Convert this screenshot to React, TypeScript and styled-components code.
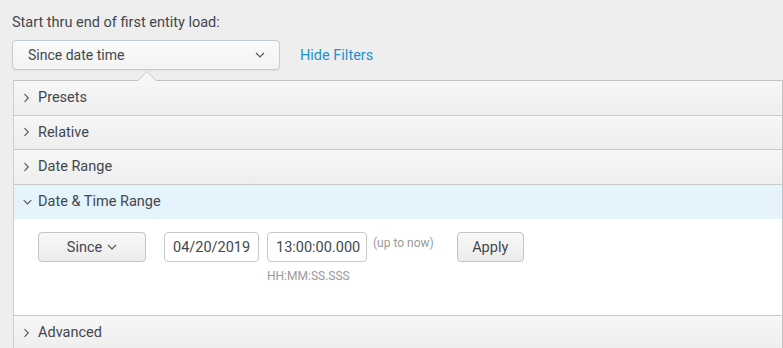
import styled, {createGlobalStyle} from 'styled-components';

const GlobalStyle = createGlobalStyle`
  html, body {
    margin: 0;
    padding: 0;
    background: #eeeeee;
    font-family: Roboto, "Liberation Sans", sans-serif;
    color: #42474d;
  }
`;

const Chevron = ({open = false}: {open?: boolean}) =>
  open ? (
    <svg width="9" height="10" viewBox="0 0 9 10" fill="none">
      <path d="M0.7 3.2 L4.5 7 L8.3 3.2" stroke="#555" strokeWidth="1.1" />
    </svg>
  ) : (
    <svg width="9" height="10" viewBox="0 0 9 10" fill="none">
      <path d="M1.5 1.2 L5.3 5 L1.5 8.8" stroke="#555" strokeWidth="1.1" />
    </svg>
  );

const DownCaret = () => (
  <svg width="10" height="6" viewBox="0 0 10 6" fill="none">
    <path d="M1 1 L5 5 L9 1" stroke="#555" strokeWidth="1.2" />
  </svg>
);

const SmallCaret = () => (
  <svg width="10" height="6" viewBox="0 0 10 6" fill="none" style={{marginLeft: 5}}>
    <path d="M1 1 L5 5 L9 1" stroke="#555" strokeWidth="1.1" />
  </svg>
);

const sections = ['Presets', 'Relative', 'Date Range'];

export default function App() {
  return (
    <>
      <GlobalStyle />
      <Page>
        <Label>Start thru end of first entity load:</Label>
        <TopRow>
          <Select>
            <span>Since date time</span>
            <DownCaret />
          </Select>
          <HideLink>Hide Filters</HideLink>
        </TopRow>
        <Panel>
          <Notch />
          {sections.map((s) => (
            <Header key={s}>
              <Chevron />
              {s}
            </Header>
          ))}
          <Header $active>
            <Chevron open />
            Date &amp; Time Range
          </Header>
          <Body>
            <Button $width={108}>
              Since <SmallCaret />
            </Button>
            <Field $width={95} $ml={18}>04/20/2019</Field>
            <TimeGroup>
              <Field $width={100} $ml={8}>13:00:00.000</Field>
              <Hint>HH:MM:SS.SSS</Hint>
            </TimeGroup>
            <UpToNow>(up to now)</UpToNow>
            <Button $width={67} $ml={23}>Apply</Button>
          </Body>
          <Header>
            <Chevron />
            Advanced
          </Header>
        </Panel>
      </Page>
    </>
  );
}

const Page = styled.div`
  padding: 15px 0 0 12px;
  height: 348px;
  box-sizing: border-box;
  overflow: hidden;
`;

const Label = styled.div`
  font-size: 14.5px;
  line-height: 16px;
`;

const TopRow = styled.div`
  display: flex;
  align-items: center;
  margin-top: 9px;
`;

const Select = styled.div`
  width: 268px;
  height: 30px;
  box-sizing: border-box;
  border: 1px solid #c3cbd4;
  border-radius: 4px;
  background: linear-gradient(#fafafa, #f3f3f3);
  box-shadow: 0 1px 1px rgba(0, 0, 0, 0.06);
  display: flex;
  align-items: center;
  justify-content: space-between;
  padding: 0 14px 0 15px;
  font-size: 14px;
`;

const HideLink = styled.a`
  margin-left: 20px;
  font-size: 14.5px;
  color: #1e93c6;
  cursor: pointer;
`;

const Panel = styled.div`
  position: relative;
  margin-top: 10px;
  margin-left: 1px;
  border-top: 1px solid #c3c3c3;
  border-left: 1px solid #d0d0d0;
  border-right: 1px solid #c3c3c3;
  background: #fff;
`;

const Notch = styled.div`
  position: absolute;
  top: -9px;
  left: 124px;
  width: 0;
  height: 0;
  border-left: 9px solid transparent;
  border-right: 9px solid transparent;
  border-bottom: 9px solid #f7f7f7;
  filter: drop-shadow(0 -1px 0 #c9c9c9);
`;

const Header = styled.div<{$active?: boolean}>`
  height: 34.5px;
  box-sizing: border-box;
  border-bottom: ${(p) => (p.$active ? 'none' : '1px solid #c9c9c9')};
  display: flex;
  align-items: center;
  gap: 6px;
  padding-left: 9px;
  font-size: 14.5px;
  background: ${(p) => (p.$active ? '#e4f3fc' : 'linear-gradient(#f7f7f7, #eeeeee)')};
`;

const Body = styled.div`
  height: 97px;
  box-sizing: border-box;
  border-bottom: 1px solid #c9c9c9;
  display: flex;
  align-items: flex-start;
  padding: 13px 0 0 24px;
  background: #fff;
`;

const Button = styled.div<{$width: number; $ml?: number}>`
  width: ${(p) => p.$width}px;
  margin-left: ${(p) => p.$ml ?? 0}px;
  height: 30px;
  box-sizing: border-box;
  border: 1px solid #c3c3c3;
  border-radius: 4px;
  background: linear-gradient(#f8f8f8, #ececec);
  display: flex;
  align-items: center;
  justify-content: center;
  font-size: 14.5px;
`;

const Field = styled.div<{$width: number; $ml?: number}>`
  width: ${(p) => p.$width}px;
  margin-left: ${(p) => p.$ml ?? 0}px;
  height: 30px;
  box-sizing: border-box;
  border: 1px solid #c9c9c9;
  border-radius: 4px;
  background: #fff;
  display: flex;
  align-items: center;
  padding-left: 8px;
  font-size: 14.5px;
`;

const TimeGroup = styled.div`
  display: flex;
  flex-direction: column;
`;

const Hint = styled.div`
  margin: 7px 0 0 8px;
  font-size: 12px;
  line-height: 14px;
  color: #999;
`;

const UpToNow = styled.div`
  margin: 4px 0 0 6px;
  font-size: 12px;
  line-height: 14px;
  color: #999;
`;
